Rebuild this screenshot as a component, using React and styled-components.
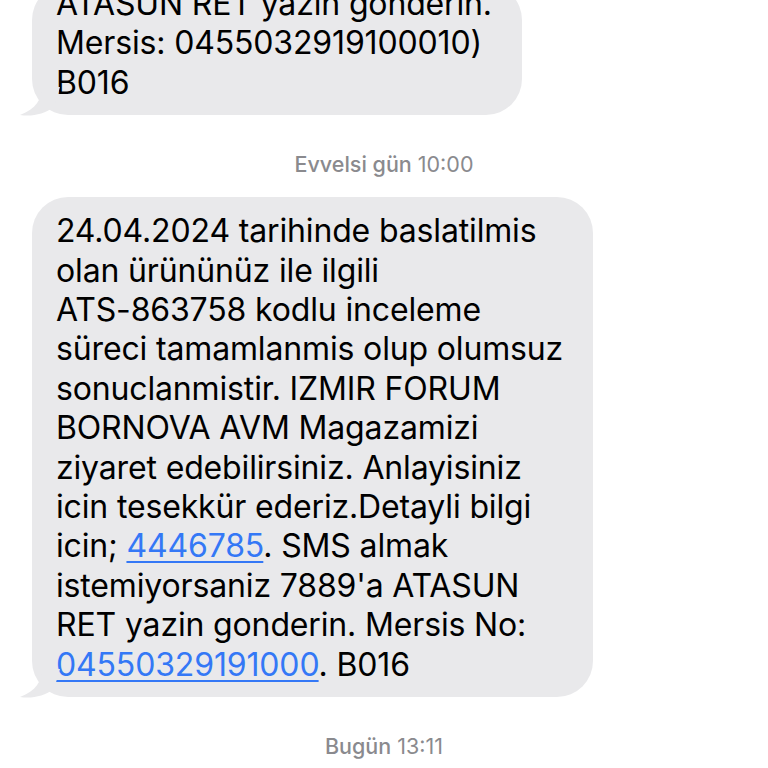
import React from "react";
import styled, { createGlobalStyle } from "styled-components";

const GlobalStyle = createGlobalStyle`
  html, body {
    margin: 0;
    padding: 0;
    background: #ffffff;
  }
  body {
    width: 768px;
    height: 768px;
    overflow: hidden;
    font-family: Inter, "Noto Sans", "Liberation Sans", sans-serif;
  }
`;

const firstLines = [
  ["ATASUN RET yazin gonderin."],
  ["Mersis: 0455032919100010)"],
  ["B016"],
];

const secondLines = [
  ["24.04.2024 tarihinde baslatilmis"],
  ["olan ürününüz ile ilgili"],
  ["ATS-863758 kodlu inceleme"],
  ["süreci tamamlanmis olup olumsuz"],
  ["sonuclanmistir. IZMIR FORUM"],
  ["BORNOVA AVM Magazamizi"],
  ["ziyaret edebilirsiniz. Anlayisiniz"],
  ["icin tesekkür ederiz.Detayli bilgi"],
  ["icin; ", { link: "4446785" }, ". SMS almak"],
  ["istemiyorsaniz 7889'a ATASUN"],
  ["RET yazin gonderin. Mersis No:"],
  [{ link: "04550329191000" }, ". B016"],
];

export default function App() {
  return (
    <>
      <GlobalStyle />
      <Thread>
        <Bubble $width={490} $top={0}>
          {firstLines.map((parts, i) => (
            <Line key={i}>{renderParts(parts)}</Line>
          ))}
          <Tail />
        </Bubble>
        <Stamp>
          <b>Evvelsi gün</b> 10:00
        </Stamp>
        <Bubble $width={561} $top={14}>
          {secondLines.map((parts, i) => (
            <Line key={i}>{renderParts(parts)}</Line>
          ))}
          <Tail />
        </Bubble>
        <Stamp>
          <b>Bugün</b> 13:11
        </Stamp>
      </Thread>
    </>
  );
}

function renderParts(parts) {
  return parts.map((p, i) =>
    typeof p === "string" ? (
      <React.Fragment key={i}>{p}</React.Fragment>
    ) : (
      <Link key={i}>{p.link}</Link>
    )
  );
}

function Tail() {
  return (
    <TailSvg width="40" height="30" viewBox="0 0 40 30">
      <path
        d="M22 0 C22 12 16 22 0 28 C12 30 24 27 34 20 L40 0 Z"
        fill="#e9e9eb"
      />
    </TailSvg>
  );
}

const Thread = styled.div`
  display: flex;
  flex-direction: column;
  align-items: flex-start;
  margin-top: -16px;
  padding-left: 32px;
`;

const Bubble = styled.div`
  position: relative;
  box-sizing: border-box;
  width: ${(p) => p.$width}px;
  background: #e9e9eb;
  border-radius: 36px;
  padding: ${(p) => p.$top}px 24px 13px 24px;
  color: #000;
  font-size: 32px;
  line-height: 39.4px;
  letter-spacing: -0.15px;
`;

const Line = styled.div`
  white-space: nowrap;
`;

const Link = styled.span`
  color: #3478f6;
  text-decoration: underline;
  text-decoration-thickness: 2px;
  text-underline-offset: 4px;
`;

const TailSvg = styled.svg`
  position: absolute;
  left: -12px;
  bottom: -2px;
`;

const Stamp = styled.div`
  align-self: stretch;
  margin-left: -32px;
  text-align: center;
  color: #8a8a8e;
  font-size: 21.5px;
  line-height: 24px;
  padding: 37px 0 21px;

  b {
    font-weight: 500;
  }
`;
